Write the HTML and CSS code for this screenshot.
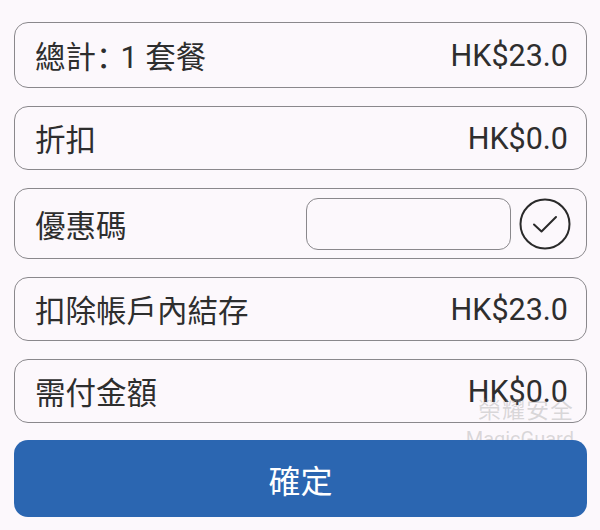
FILE: index.html
```html
<!DOCTYPE html>
<html>
<head>
    <meta charset="UTF-8">
    <meta name="viewport" content="width=device-width, initial-scale=1.0">
    <title>付款</title>
    <link rel="stylesheet" href="styles.css">
</head>
<body>
<div id="checkout">
    <div class="row row-total">
        <span class="label">總計<span class="colon">：</span>1 套餐</span>
        <span class="amount">HK$23.0</span>
    </div>
    <div class="row">
        <span class="label">折扣</span>
        <span class="amount">HK$0.0</span>
    </div>
    <div class="row row-coupon">
        <span class="label">優惠碼</span>
        <input type="text" class="coupon-input">
        <button class="coupon-check">
            <svg width="52" height="52" viewBox="0 0 52 52">
                <circle cx="26" cy="26" r="24.5" fill="none" stroke="#2a2a2a" stroke-width="2"/>
                <path d="M15 26.5 L22.5 33.5 L37 19" fill="none" stroke="#2a2a2a" stroke-width="2" stroke-linecap="round" stroke-linejoin="round"/>
            </svg>
        </button>
    </div>
    <div class="row">
        <span class="label">扣除帳戶內結存</span>
        <span class="amount">HK$23.0</span>
    </div>
    <div class="row">
        <span class="label">需付金額</span>
        <span class="amount">HK$0.0</span>
    </div>
    <button id="confirmButton">確定</button>
    <div class="watermark">
        <div class="wm-cn">榮耀安全</div>
        <div class="wm-en">MagicGuard</div>
    </div>
</div>
</body>
</html>
```

FILE: styles.css
```css
body {
    margin: 0;
    background-color: #fcf8fc;
    font-family: Roboto, "Noto Sans CJK TC", sans-serif;
    color: #2e2e2e;
}
#checkout {
    position: relative;
    padding: 22px 13px 0 14px;
    display: flex;
    flex-direction: column;
    gap: 18px;
}
.row {
    box-sizing: border-box;
    height: 64px;
    border: 1.5px solid #8a888c;
    border-radius: 14px;
    display: flex;
    align-items: center;
    justify-content: space-between;
    padding: 0 18px 0 20px;
    font-size: 30.5px;
}
.row-total {
    height: 66px;
}
.row-coupon {
    height: 71px;
    padding-right: 15px;
}
.label {
    flex-grow: 1;
}
.colon {
    font-family: "Noto Sans CJK SC", sans-serif;
    letter-spacing: -6px;
}
.coupon-input {
    box-sizing: border-box;
    width: 205px;
    height: 52px;
    border: 1.5px solid #8a888c;
    border-radius: 12px;
    background: transparent;
    margin-right: 8px;
    font-size: 20px;
}
.coupon-check {
    border: none;
    background: none;
    padding: 0;
    width: 52px;
    height: 52px;
    display: flex;
}
#confirmButton {
    position: relative;
    z-index: 1;
    height: 77px;
    margin-top: -1px;
    border: none;
    border-radius: 14px;
    background-color: #2b66b1;
    color: #fff;
    font-family: Roboto, "Noto Sans CJK TC", sans-serif;
    font-size: 32px;
}
.watermark {
    position: absolute;
    right: 26px;
    top: 398px;
    text-align: right;
    color: rgba(150, 150, 150, 0.35);
    line-height: 1.15;
}
.wm-cn {
    font-size: 23px;
    letter-spacing: 1px;
}
.wm-en {
    font-size: 20px;
    margin-top: 4px;
}
```
